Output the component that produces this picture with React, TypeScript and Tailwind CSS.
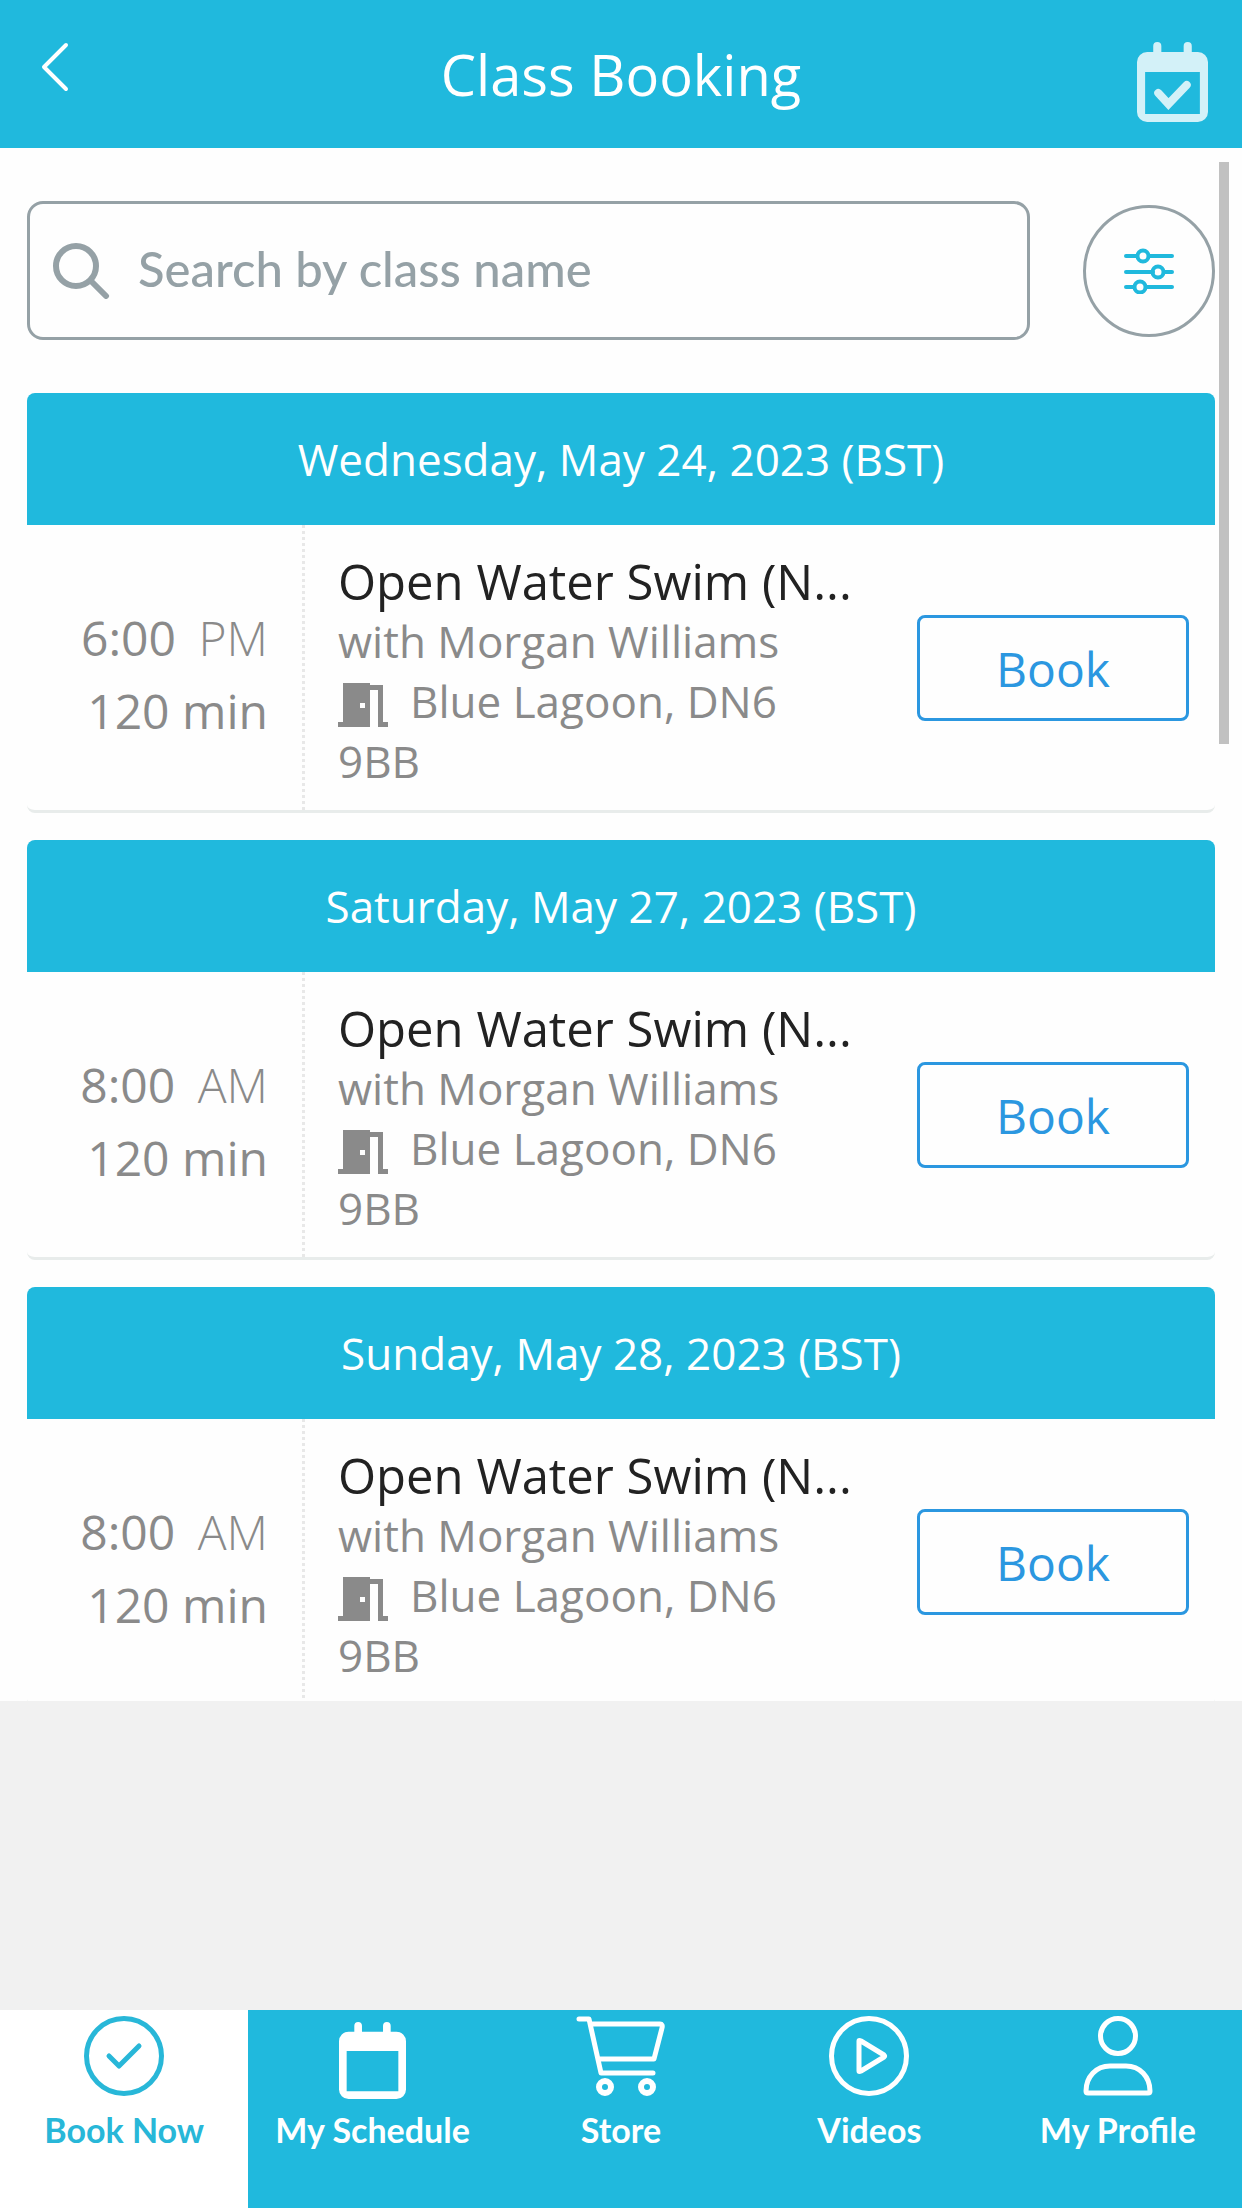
const classes = [
  { date: 'Wednesday, May 24, 2023 (BST)', time: '6:00', period: 'PM' },
  { date: 'Saturday, May 27, 2023 (BST)', time: '8:00', period: 'AM' },
  { date: 'Sunday, May 28, 2023 (BST)', time: '8:00', period: 'AM' },
]

function CalendarIcon({ checked, className }: { checked?: boolean; className?: string }) {
  return (
    <svg viewBox="0 0 70 80" className={className} preserveAspectRatio="none" fill="none" aria-hidden="true">
      <path
        fill="currentColor"
        fillRule="evenodd"
        d="M16 10V4a4 4 0 0 1 8 0v6h22V4a4 4 0 0 1 8 0v6h6a10 10 0 0 1 10 10v50a10 10 0 0 1-10 10H10A10 10 0 0 1 0 70V20a10 10 0 0 1 10-10zM8 30v42h54V30z"
      />
      {checked && <path d="M21 51l10 11 18-19" stroke="currentColor" strokeWidth="8" strokeLinecap="round" />}
    </svg>
  )
}

function DoorIcon() {
  return (
    <svg viewBox="0 0 50 44" className="inline-block h-[44px] w-[50px] mr-[22px] align-[-9px]" fill="currentColor" aria-hidden="true">
      <path fillRule="evenodd" d="M5 0h27v44H0v-5h5zM22 20v5h5v-5z" />
      <path d="M32 2h13v37h5v5H40V7h-8z" />
    </svg>
  )
}

function ClassCard({ date, time, period }: { date: string; time: string; period: string }) {
  return (
    <section className="shrink-0 rounded-lg border-b-3 border-[#e8eceb] overflow-hidden">
      <h2 className="h-[132px] flex items-center justify-center bg-[#20b9dd] text-white text-[44px]">{date}</h2>
      <div className="flex h-[285px]">
        <div className="w-[278px] shrink-0 border-r-3 border-dotted border-[#e8e8e8] pr-[34px] pt-3 flex flex-col justify-center text-right text-[48px] leading-[73px] text-[#8a8a8a]">
          <p>
            {time} <span className="font-light ml-[10px]">{period}</span>
          </p>
          <p>120 min</p>
        </div>
        <div className="flex-1 min-w-0 pl-[33px] pr-[57px] pt-[26px] text-[44px] leading-[60px] text-[#8a8a8a]">
          <h3 className="text-[49px] text-[#222] whitespace-nowrap">Open Water Swim (N...</h3>
          <p>with Morgan Williams</p>
          <p>
            <DoorIcon />
            Blue Lagoon, DN6 9BB
          </p>
        </div>
        <button className="self-center mr-[26px] w-[272px] h-[106px] shrink-0 border-3 border-[#2b97e0] rounded-lg pt-[2px] text-[48px] text-[#2b97e0]">
          Book
        </button>
      </div>
    </section>
  )
}

const navItems = [
  {
    label: 'Book Now',
    icon: (
      <svg viewBox="0 0 80 80" className="size-20" fill="none" stroke="currentColor" strokeWidth="5" strokeLinecap="round" strokeLinejoin="round">
        <circle cx="40" cy="40" r="37.5" />
        <path d="M25 40l10 10 20-20" />
      </svg>
    ),
  },
  { label: 'My Schedule', icon: <CalendarIcon className="mt-[6px] h-[77px] w-[67px]" /> },
  {
    label: 'Store',
    icon: (
      <svg viewBox="0 0 90 80" className="h-20 w-[90px]" fill="none" stroke="currentColor" strokeWidth="5" strokeLinecap="round" strokeLinejoin="round">
        <path d="M3 3h10l12 54h52M15 8h69q3 0 2 4l-8 31H22" />
        <circle cx="29" cy="71" r="6" strokeWidth="6" />
        <circle cx="71" cy="71" r="6" strokeWidth="6" />
      </svg>
    ),
  },
  {
    label: 'Videos',
    icon: (
      <svg viewBox="0 0 80 80" className="size-20" fill="none" stroke="currentColor" strokeWidth="5" strokeLinecap="round" strokeLinejoin="round">
        <circle cx="40" cy="40" r="37.5" />
        <path d="M30 25v30q0 1 2 0l23-14q1-1 0-2L32 25q-2-1-2 0z" />
      </svg>
    ),
  },
  {
    label: 'My Profile',
    icon: (
      <svg viewBox="0 0 70 80" className="h-20 w-[70px]" fill="none" stroke="currentColor" strokeWidth="5" strokeLinejoin="round">
        <circle cx="35" cy="20" r="17.5" />
        <path d="M27 50h16c14 0 24 11 24 25q0 2-2 2H5q-2 0-2-2c0-14 10-25 24-25z" />
      </svg>
    ),
  },
]

export default function App() {
  return (
    <div className="h-screen flex flex-col bg-[#f1f1f1] font-['Open_Sans',sans-serif]">
      {/* Header */}
      <header className="h-[148px] shrink-0 grid grid-cols-[1fr_auto_1fr] bg-[#20b9dd] text-white">
        <button aria-label="Back" className="ml-[41px] mt-[42px] justify-self-start self-start">
          <svg viewBox="0 0 28 50" className="h-[50px] w-7" fill="none" stroke="currentColor" strokeWidth="4" strokeLinecap="round" strokeLinejoin="round">
            <path d="M25 3L3 25l22 22" />
          </svg>
        </button>
        <h1 className="self-center text-[56px]">Class Booking</h1>
        <button aria-label="My bookings" className="mr-[34px] mt-[42px] justify-self-end self-start text-[#d3f1f8]">
          <CalendarIcon checked className="h-20 w-[71px]" />
        </button>
      </header>

      {/* Class list */}
      <main className="relative flex-1 min-h-0 overflow-hidden bg-[#fefefe] px-[27px] pt-[53px] flex flex-col gap-[27px]">
        <div className="flex items-center gap-[53px] mb-[26px] shrink-0">
          <label className="flex-1 min-w-0 h-[139px] flex items-center gap-7 pl-[23px] border-3 border-[#95a1a6] rounded-2xl text-[#95a1a6]">
            <svg viewBox="0 0 57 57" className="size-[57px] shrink-0" fill="none" stroke="currentColor" strokeWidth="6" strokeLinecap="round">
              <circle cx="23" cy="24" r="20" />
              <path d="M38 39l15 15" />
            </svg>
            <input
              type="text"
              aria-label="Search by class name"
              placeholder="Search by class name"
              className="flex-1 min-w-0 pb-1 outline-none font-['Lato',sans-serif] font-medium text-[49px] placeholder:text-[#95a1a6]"
            />
          </label>
          <button aria-label="Filters" className="size-[132px] shrink-0 rounded-full border-3 border-[#95a1a6] flex items-center justify-center text-[#20b9dd]">
            <svg viewBox="0 0 50 46" className="h-[46px] w-[50px]" fill="none" stroke="currentColor" strokeWidth="4" strokeLinecap="round">
              <path d="M2 8h11M25 8h23M2 24h27M40 24h8M2 39h8M22 39h26" />
              <circle cx="19" cy="8" r="5.5" />
              <circle cx="34" cy="24" r="5.5" />
              <circle cx="16" cy="39" r="5.5" />
            </svg>
          </button>
        </div>

        {classes.map((item) => (
          <ClassCard key={item.date} {...item} />
        ))}

        <div className="absolute right-[13px] top-[14px] w-[10px] h-[582px] bg-[#c1c1c1]" />
      </main>

      {/* Bottom navigation */}
      <nav className="mt-[309px] h-[198px] shrink-0 grid grid-cols-5 bg-[#20b9dd] text-white font-['Lato',sans-serif] font-bold text-[34px]">
        {navItems.map((item, i) => (
          <a
            key={item.label}
            href="#"
            className={i === 0 ? 'flex flex-col items-center pt-[6px] bg-white text-[#28b7d8]' : 'flex flex-col items-center pt-[6px]'}
          >
            <span className="h-[90px] flex items-start">{item.icon}</span>
            <span className="whitespace-nowrap leading-[48px]">{item.label}</span>
          </a>
        ))}
      </nav>
    </div>
  )
}
